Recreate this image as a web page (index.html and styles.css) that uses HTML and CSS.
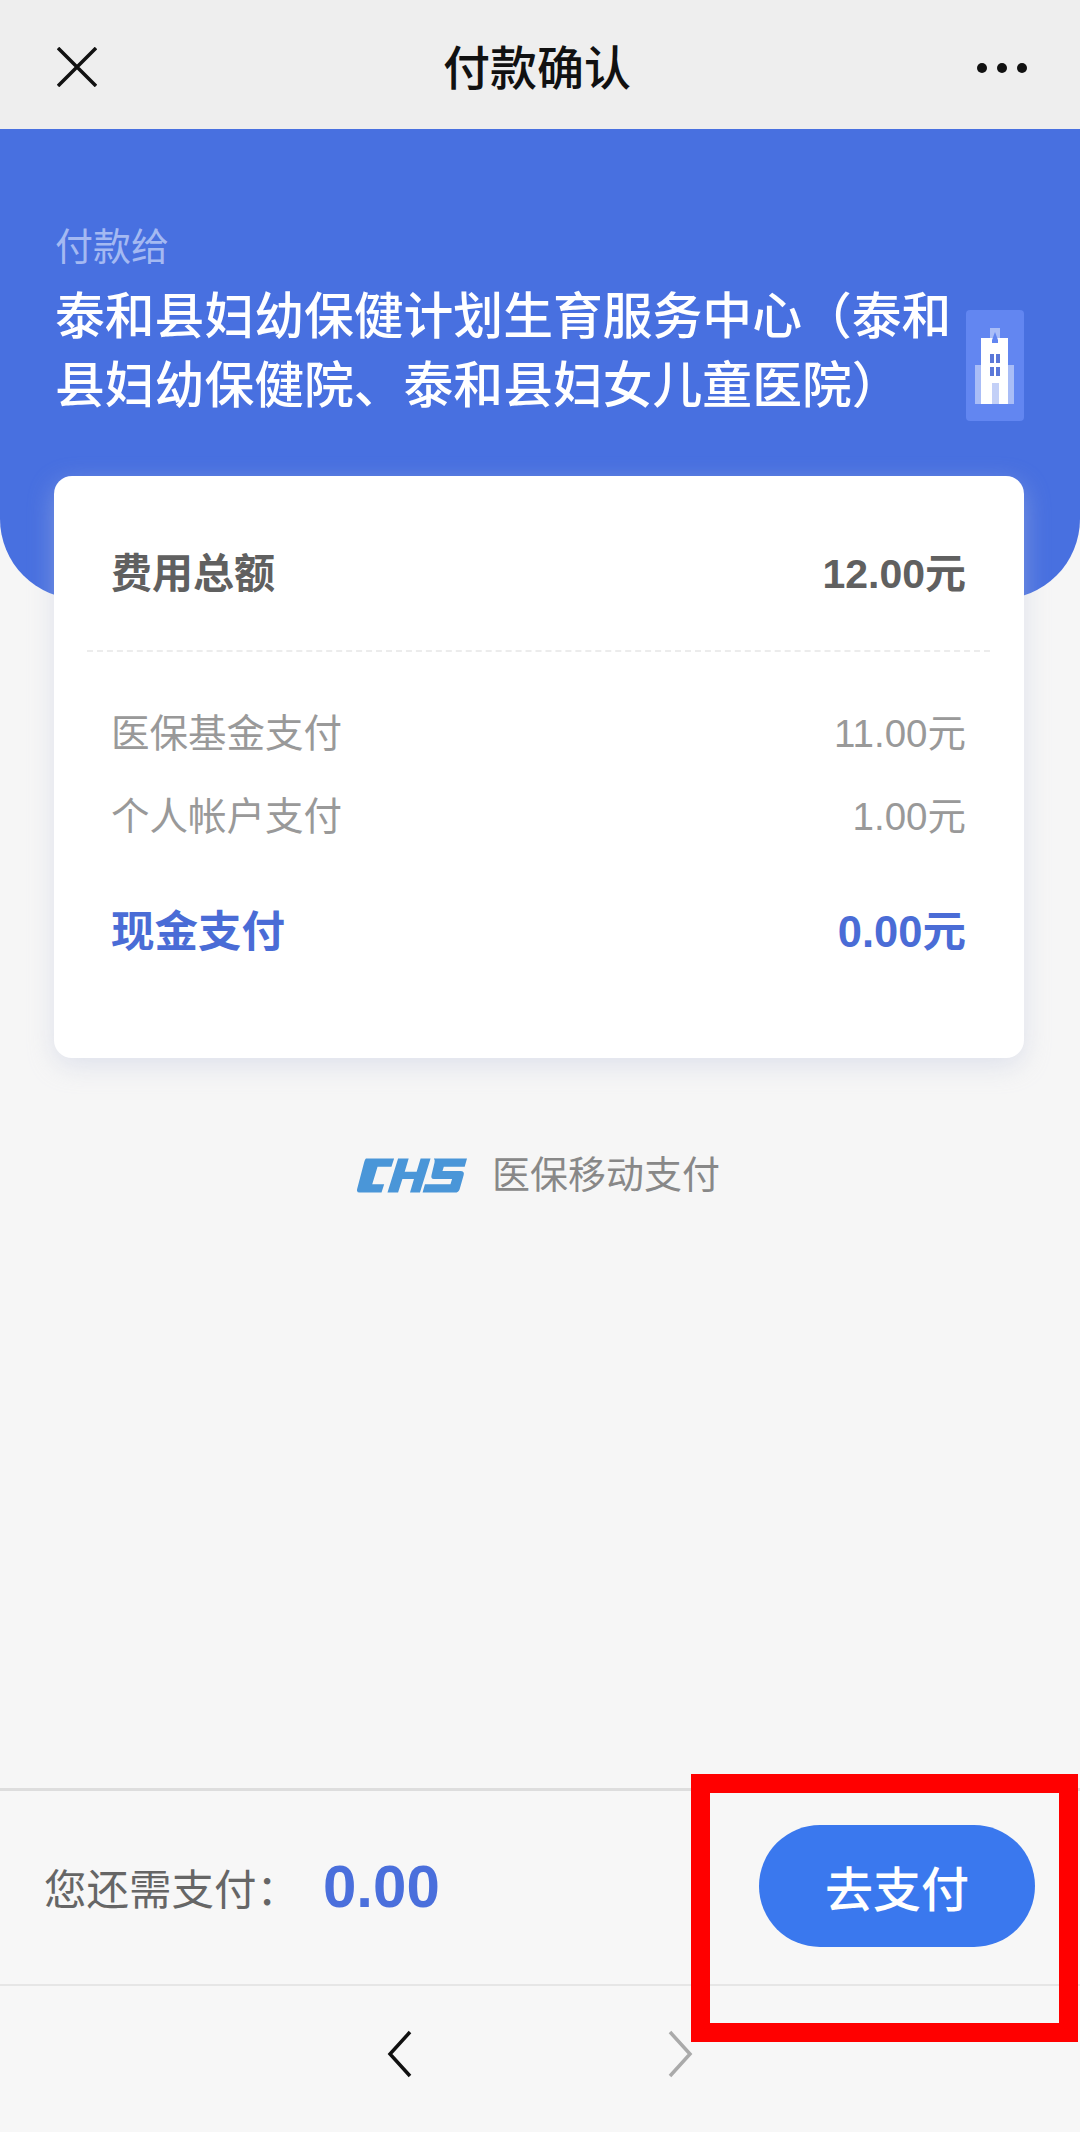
FILE: index.html
```html
<!DOCTYPE html>
<html lang="zh-CN">
<head>
    <meta charset="UTF-8">
    <meta name="viewport" content="width=device-width, initial-scale=1.0">
    <title>付款确认</title>
    <link rel="stylesheet" href="styles.css">
</head>
<body>
    <div class="page">
        <header class="topbar">
            <svg class="close-icon" width="40" height="40" viewBox="0 0 40 40">
                <path d="M1 1 L39 39 M39 1 L1 39" />
            </svg>
            <div class="topbar-title">付款确认</div>
            <div class="more-icon"><i></i><i></i><i></i></div>
        </header>

        <section class="banner">
            <div class="pay-to">付款给</div>
            <div class="payee">
                <div class="payee-name">泰和县妇幼保健计划生育服务中心（泰和县妇幼保健院、泰和县妇女儿童医院）</div>
                <svg class="payee-icon" width="58" height="111" viewBox="0 0 58 111">
                    <rect width="58" height="111" rx="4" fill="#6286f1" />
                    <rect x="9" y="55" width="39" height="39" fill="#a9bdf7" />
                    <rect x="24" y="18" width="10" height="10" fill="#a9bdf7" />
                    <rect x="15" y="28" width="27" height="66" fill="#fff" />
                    <path d="M29 22 L32 30 L32 33 L26 33 L26 30 Z" fill="#6286f1" />
                    <path d="M24 44 h4 v9 h-4 z M30 44 h4 v9 h-4 z M24 57 h4 v9 h-4 z M30 57 h4 v9 h-4 z" fill="#5b78d8" />
                    <rect x="26" y="73" width="7" height="21" fill="#c3d0f7" />
                </svg>
            </div>
        </section>

        <section class="card">
            <div class="row row-total">
                <span>费用总额</span>
                <span>12.00元</span>
            </div>
            <div class="dashed"></div>
            <div class="row row-fund">
                <span>医保基金支付</span>
                <span>11.00元</span>
            </div>
            <div class="row row-account">
                <span>个人帐户支付</span>
                <span>1.00元</span>
            </div>
            <div class="row row-cash">
                <span>现金支付</span>
                <span>0.00元</span>
            </div>
        </section>

        <div class="brand">
            <svg class="brand-logo" width="110" height="35" viewBox="0 0 332 103">
                <path d="M27 0 H112 L104 25 H62 L46 78 H82 L74 103 H8 Q-3 103 1 90 L22 10 Q24 3 27 0 Z" />
                <path d="M124 0 H156 L144 40 H180 L192 0 H222 L190 103 H160 L172 62 H137 L124 103 H92 Z" />
                <path d="M232 0 H332 L325 25 H262 L258 38 H312 Q325 38 322 50 L310 92 Q307 103 295 103 H198 L205 78 H282 L287 62 H232 Q222 62 225 50 L234 12 Q236 4 232 0 Z" />
            </svg>
            <span class="brand-text">医保移动支付</span>
        </div>

        <footer class="footer">
            <div class="paybar">
                <div class="due">
                    <span class="due-label">您还需支付：</span>
                    <span class="due-amount">0.00</span>
                </div>
                <div class="pay-btn">去支付</div>
            </div>
            <nav class="navbar">
                <svg class="nav-icon nav-back" width="26" height="48" viewBox="0 0 26 48">
                    <path d="M23 2 L3 24 L23 46" />
                </svg>
                <svg class="nav-icon nav-forward" width="26" height="48" viewBox="0 0 26 48">
                    <path d="M3 2 L23 24 L3 46" />
                </svg>
            </nav>
        </footer>

        <div class="highlight"></div>
    </div>
</body>
</html>
```

FILE: styles.css
```css
body {
    margin: 0;
    background: #f6f6f6;
    font-family: "Liberation Sans", "Noto Sans CJK SC", sans-serif;
}
.page {
    position: relative;
    width: 1080px;
    height: 2132px;
    display: flex;
    flex-direction: column;
    overflow: hidden;
}

/* top bar */
.topbar {
    height: 129px;
    flex-shrink: 0;
    padding: 0 53px 0 57px;
    background: #eeeeee;
    display: flex;
    align-items: center;
    justify-content: space-between;
    box-sizing: border-box;
}
.close-icon {
    margin-top: 5px;
}
.close-icon path {
    fill: none;
    stroke: #111;
    stroke-width: 3.5;
}
.topbar-title {
    font-size: 47px;
    font-weight: 500;
    color: #111;
}
.more-icon {
    display: flex;
    gap: 10px;
    margin-top: 7px;
}
.more-icon i {
    width: 10px;
    height: 10px;
    border-radius: 50%;
    background: #111;
}

/* blue banner */
.banner {
    height: 470px;
    flex-shrink: 0;
    box-sizing: border-box;
    padding: 93px 56px 0 55px;
    background: #4870e0;
    border-radius: 0 0 80px 80px;
    color: #fff;
}
.pay-to {
    font-size: 38px;
    line-height: 50px;
    color: #a4b9f2;
}
.payee {
    margin-top: 11px;
    display: flex;
    justify-content: space-between;
    align-items: flex-start;
}
.payee-name {
    width: 900px;
    font-size: 49.8px;
    font-weight: 500;
    line-height: 69px;
}
.payee-icon {
    margin-top: 27px;
    flex-shrink: 0;
}

/* amounts card */
.card {
    margin: -123px 56px 0 54px;
    height: 582px;
    flex-shrink: 0;
    box-sizing: border-box;
    padding: 0 58px 0 57px;
    background: #fff;
    border-radius: 18px;
    box-shadow: 0 8px 26px rgba(190, 198, 222, 0.42);
}
.row {
    display: flex;
    justify-content: space-between;
    align-items: center;
}
.row-total {
    height: 60px;
    margin-top: 64px;
    font-size: 41px;
    font-weight: 700;
    color: #606060;
}
.dashed {
    margin: 50px -24px 0;
    border-top: 2px dashed #ececec;
}
.row-fund,
.row-account {
    height: 60px;
    font-size: 38.5px;
    color: #999;
}
.row-fund {
    margin-top: 48px;
}
.row-account {
    margin-top: 23px;
}
.row-cash {
    height: 60px;
    margin-top: 55px;
    font-size: 43.5px;
    font-weight: 700;
    color: #4a6cd6;
}

/* brand line */
.brand {
    margin-top: 86px;
    display: flex;
    justify-content: center;
    align-items: center;
    gap: 25px;
    padding-right: 3px;
    font-size: 38px;
    color: #888;
}
.brand-text {
    margin-bottom: 8px;
}
.brand-logo path {
    fill: #4a96d8;
}

/* bottom */
.footer {
    margin-top: auto;
    background: #f7f7f7;
}
.paybar {
    height: 198px;
    box-sizing: border-box;
    padding: 0 45px 3px 44px;
    border-top: 3px solid #dddddd;
    border-bottom: 2px solid #e6e6e6;
    display: flex;
    align-items: center;
    justify-content: space-between;
}
.due {
    display: flex;
    align-items: center;
}
.due-label {
    width: 279px;
    font-size: 42.5px;
    color: #666;
}
.due-amount {
    font-size: 60px;
    font-weight: 700;
    color: #4a6fdc;
}
.pay-btn {
    width: 276px;
    height: 122px;
    border-radius: 61px;
    background: #3a78ee;
    color: #fff;
    font-size: 48px;
    font-weight: 500;
    display: flex;
    align-items: center;
    justify-content: center;
}
.navbar {
    height: 146px;
    display: flex;
    justify-content: center;
    gap: 254px;
}
.nav-icon {
    margin-top: 44px;
}
.nav-icon path {
    fill: none;
    stroke-width: 3.5;
}
.nav-back path {
    stroke: #111;
}
.nav-forward path {
    stroke: #aaa;
}

/* red annotation box */
.highlight {
    position: absolute;
    left: 691px;
    top: 1774px;
    width: 387px;
    height: 268px;
    box-sizing: border-box;
    border: 19px solid #ff0000;
}
```
